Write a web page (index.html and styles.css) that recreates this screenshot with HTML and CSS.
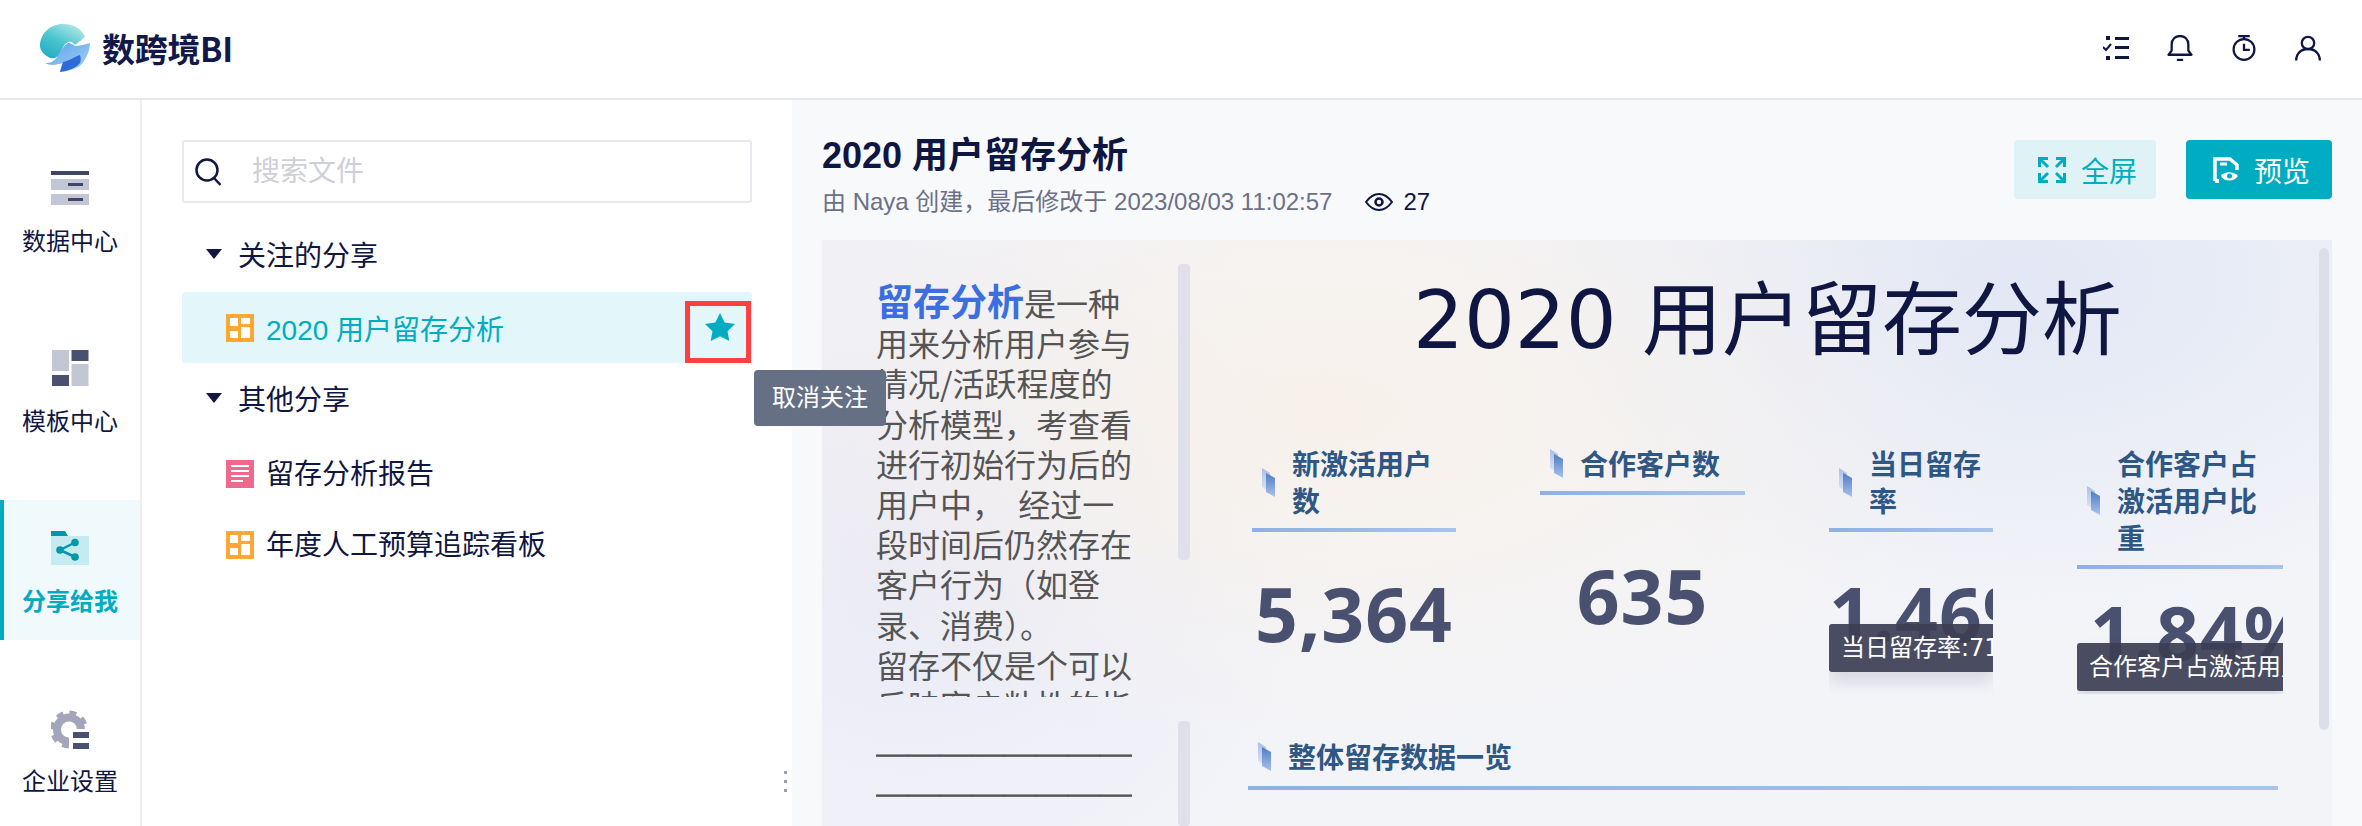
FILE: index.html
```html
<!doctype html>
<html lang="zh-CN">
<head>
	<meta charset="UTF-8">
	<title>数跨境BI</title>
	<link rel="stylesheet" href="styles.css">
</head>
<body>
	<svg class="defs" width="0" height="0">
		<defs>
			<linearGradient id="markBack" x1="0" y1="0" x2="0" y2="1">
				<stop offset="0" stop-color="#a9bfe6"/>
				<stop offset="1" stop-color="#dfe6f5"/>
			</linearGradient>
			<linearGradient id="markFront" x1="0" y1="0" x2="0" y2="1">
				<stop offset="0" stop-color="#4f7cc6"/>
				<stop offset="1" stop-color="#a9c2ea"/>
			</linearGradient>
			<linearGradient id="logoBall" x1="0.8" y1="0" x2="0.1" y2="1">
				<stop offset="0" stop-color="#b5e8e8"/>
				<stop offset="0.5" stop-color="#4cc6cf"/>
				<stop offset="1" stop-color="#1fa9c4"/>
			</linearGradient>
			<linearGradient id="logoWave" x1="0" y1="0" x2="1" y2="1">
				<stop offset="0" stop-color="#5aa0ea"/>
				<stop offset="1" stop-color="#a9d4f5"/>
			</linearGradient>
			<symbol id="mark" viewBox="0 0 13 29">
				<path d="M0 0 8 5V24L0 19Z" fill="url(#markBack)"/>
				<path d="M4 5 13 10V29L4 24Z" fill="url(#markFront)"/>
			</symbol>
			<symbol id="dash" viewBox="0 0 28 28">
				<rect width="28" height="28" fill="#ffa733"/>
				<rect x="4" y="4" width="8" height="8" fill="#fff"/>
				<rect x="15" y="4" width="9" height="6" fill="#fff"/>
				<rect x="4" y="17" width="8" height="7" fill="#fff"/>
				<rect x="15" y="13" width="9" height="11" fill="#fff"/>
			</symbol>
		</defs>
	</svg>

	<header class="topbar">
		<div class="logo">
			<svg class="logo-mark" viewBox="0 0 50 48">
				<path d="M23 0C34 0 42 5 45 13 41 16 38 19 35 21 33 18 30 17 28 18 24 20 22 25 20 29 18 33 15 35 10 34 4 31 0 26 0 22 0 10 10 0 23 0Z" fill="url(#logoBall)"/>
				<path d="M5 39C10 39 14 38 17 33 20 28 23 22 28 19 31 19 33 21 35 22 40 22 45 20 50 19 50 26 47 33 42 40 38 44 33 46 20 48 21 44 22 41 23 39 17 41 10 42 5 39Z" fill="url(#logoWave)"/>
				<path d="M23 38C29 37 34 33 40 31 41 34 41 37 40 39 36 44 28 47 20 48 21 44 22 41 23 38Z" fill="#2f6bd8"/>
			</svg>
			<span class="logo-text">数跨境BI</span>
		</div>
		<div class="top-icons">
			<svg class="top-icon" viewBox="0 0 26 24">
				<path d="M3 0h4v4H3zM3 20h4v4H3zM12 1h14v3H12zM12 10h14v3H12zM12 20h14v3H12z" fill="#0f1642"/>
				<path d="M0 11 3 14 8 8" fill="none" stroke="#0f1642" stroke-width="2"/>
			</svg>
			<svg class="top-icon" viewBox="0 0 24 25">
				<path d="M1 19H23L20 15V9C20 4 16.500 1 12 1S4 4 4 9V15Z" fill="none" stroke="#0f1642" stroke-width="2.200" stroke-linejoin="round"/>
				<path d="M9 24H15" stroke="#0f1642" stroke-width="2.200"/>
			</svg>
			<svg class="top-icon" viewBox="0 0 24 27">
				<circle cx="12" cy="15" r="10.800" fill="none" stroke="#0f1642" stroke-width="2.300"/>
				<path d="M6 1.200H18M12 1V4M12 9V15.500H18" fill="none" stroke="#0f1642" stroke-width="2.400"/>
			</svg>
			<svg class="top-icon" viewBox="0 0 26 25">
				<circle cx="13" cy="7.500" r="6.200" fill="none" stroke="#0f1642" stroke-width="2.300"/>
				<path d="M1.200 25C1.200 18 6 13.500 13 13.500S24.800 18 24.800 25" fill="none" stroke="#0f1642" stroke-width="2.300"/>
			</svg>
		</div>
	</header>

	<div class="main">
		<nav class="sidenav">
			<a class="nav-item">
				<svg class="nav-icon" viewBox="0 0 38 36">
					<rect y="1" width="38" height="4" fill="#3f4668"/>
					<rect y="9" width="38" height="11" fill="#c3c6d3"/>
					<rect y="24" width="38" height="11" fill="#c3c6d3"/>
					<rect x="17" y="13" width="15" height="3" fill="#3f4668"/>
					<rect x="17" y="28" width="15" height="3" fill="#3f4668"/>
				</svg>
				<span>数据中心</span>
			</a>
			<a class="nav-item">
				<svg class="nav-icon" viewBox="0 0 38 36">
					<rect x="1" width="17" height="21" fill="#c3c6d3"/>
					<rect x="20.500" width="17" height="11" fill="#4a5070"/>
					<rect x="1" y="25" width="17" height="11" fill="#4a5070"/>
					<rect x="20.500" y="14" width="17" height="22" fill="#c3c6d3"/>
				</svg>
				<span>模板中心</span>
			</a>
			<a class="nav-item nav-item-active">
				<svg class="nav-icon" viewBox="0 0 38 36">
					<path d="M0 6H38V35H0Z" fill="#c5eaf0"/>
					<path d="M0 1H14L17 6H0Z" fill="#0097a7"/>
					<path d="M9 20 24 12.500M9 20 24 27" stroke="#0097a7" stroke-width="2.500"/>
					<circle cx="9" cy="20" r="3.800" fill="#0097a7"/>
					<circle cx="24" cy="12.500" r="3.800" fill="#0097a7"/>
					<circle cx="24" cy="27" r="3.800" fill="#0097a7"/>
				</svg>
				<span>分享给我</span>
			</a>
			<a class="nav-item">
				<svg class="nav-icon nav-icon-tall" viewBox="0 0 38 39">
					<circle cx="18" cy="19.500" r="12" fill="none" stroke="#a3a6bb" stroke-width="8"/>
					<circle cx="18" cy="19.500" r="17" fill="none" stroke="#a3a6bb" stroke-width="4" stroke-dasharray="7 6.350"/>
					<rect x="18" y="19" width="20" height="20" fill="#fff"/>
					<rect x="22" y="22" width="16" height="6" fill="#4a5070"/>
					<rect x="22" y="33" width="16" height="6" fill="#4a5070"/>
				</svg>
				<span>企业设置</span>
			</a>
		</nav>

		<aside class="panel">
			<div class="search">
				<svg class="search-icon" viewBox="0 0 26 28">
					<circle cx="12" cy="12" r="10.500" fill="none" stroke="#0f1642" stroke-width="2.500"/>
					<path d="M19 20 25.500 27" stroke="#0f1642" stroke-width="2.500"/>
				</svg>
				<span class="search-text">搜索文件</span>
			</div>

			<div class="group-head"><i class="caret"></i>关注的分享</div>
			<div class="file-row file-row-active">
				<svg class="file-icon"><use href="#dash"/></svg>
				<span>2020 用户留存分析</span>
				<div class="star-box">
					<svg class="star" viewBox="0 0 30 28">
						<path d="M15 0 19.600 9.500 30 11 22.500 18.300 24.300 28 15 23.200 5.700 28 7.500 18.300 0 11 10.400 9.500Z" fill="#00acc1"/>
					</svg>
				</div>
			</div>
			<div class="group-head group-head-next"><i class="caret"></i>其他分享</div>
			<div class="file-row file-row-first">
				<svg class="file-icon" viewBox="0 0 28 28">
					<rect width="28" height="28" fill="#f0688c"/>
					<path d="M5 6H23M5 11H23M5 16H23M5 21H17" stroke="#fff" stroke-width="2"/>
				</svg>
				<span class="file-name">留存分析报告</span>
			</div>
			<div class="file-row">
				<svg class="file-icon"><use href="#dash"/></svg>
				<span class="file-name">年度人工预算追踪看板</span>
			</div>

			<div class="tooltip">取消关注</div>
			<div class="resizer"><i></i><i></i><i></i></div>
		</aside>

		<section class="content">
			<div class="content-head">
				<div>
					<h1 class="page-title">2020 用户留存分析</h1>
					<div class="meta">
						<span>由 Naya 创建，最后修改于 2023/08/03 11:02:57</span>
						<svg class="eye" viewBox="0 0 28 18">
							<path d="M1 9C5 3.500 9 1 14 1S23 3.500 27 9C23 14.500 19 17 14 17S5 14.500 1 9Z" fill="none" stroke="#0f1642" stroke-width="2"/>
							<circle cx="14" cy="9" r="3.500" fill="none" stroke="#0f1642" stroke-width="2.500"/>
						</svg>
						<span class="views">27</span>
					</div>
				</div>
				<div class="actions">
					<a class="btn btn-light">
						<svg class="btn-icon" viewBox="0 0 28 26" fill="none" stroke="#00acc1" stroke-width="3">
							<path d="M1.500 10V1.500H10M2 2 10 10"/>
							<path d="M26.500 10V1.500H18M26 2 18 10"/>
							<path d="M1.500 16V24.500H10M2 24 10 16"/>
							<path d="M26.500 16V24.500H18M26 24 18 16"/>
						</svg>
						全屏
					</a>
					<a class="btn btn-solid">
						<svg class="btn-icon btn-icon-doc" viewBox="0 0 26 26">
							<path d="M2 24V2H17L24 8V13" fill="none" stroke="#fff" stroke-width="3.500"/>
							<path d="M7 7H14" stroke="#fff" stroke-width="3"/>
							<path d="M2 24H6" stroke="#fff" stroke-width="4"/>
							<path d="M8 19C11 14 21 14 25 19 21 25 11 25 8 19Z" fill="#fff"/>
							<circle cx="16.500" cy="19" r="2.500" fill="#00acc1"/>
						</svg>
						预览
					</a>
				</div>
			</div>

			<div class="report">
				<div class="report-side">
					<div class="side-block side-block-text">
						<div class="side-text">
							<b class="side-strong">留存分析</b>是一种用来分析用户参与情况/活跃程度的分析模型，考查看进行初始行为后的用户中，&nbsp;&nbsp;经过一段时间后仍然存在客户行为（如登录、消费）。<br>留存不仅是个可以反映客户粘性的指标，也是衡量产品价值的重要依据。
						</div>
						<div class="side-scroll"></div>
					</div>
					<div class="side-block side-block-lines">
						<div class="side-text side-text-lines">＿＿＿＿＿＿＿＿<br>＿＿＿＿＿＿＿＿</div>
						<div class="side-scroll side-scroll-full"></div>
					</div>
				</div>

				<div class="report-body">
					<h2 class="report-title">2020 用户留存分析</h2>
					<div class="kpis">
						<div class="kpi kpi-w1">
							<div class="kpi-head">
								<svg class="mark"><use href="#mark"/></svg>
								<div class="kpi-label">新激活用户数</div>
							</div>
							<div class="kpi-value"><span>5,364</span></div>
						</div>
						<div class="kpi kpi-w2">
							<div class="kpi-head">
								<svg class="mark"><use href="#mark"/></svg>
								<div class="kpi-label">合作客户数</div>
							</div>
							<div class="kpi-value"><span>635</span></div>
						</div>
						<div class="kpi kpi-w3">
							<div class="kpi-head">
								<svg class="mark"><use href="#mark"/></svg>
								<div class="kpi-label">当日留存率</div>
							</div>
							<div class="kpi-value kpi-value-start">
								<span>1.46%</span>
								<div class="kpi-tip">当日留存率:71.46%</div>
							</div>
						</div>
						<div class="kpi kpi-w4">
							<div class="kpi-head">
								<svg class="mark"><use href="#mark"/></svg>
								<div class="kpi-label">合作客户占激活用户比重</div>
							</div>
							<div class="kpi-value kpi-value-start kpi-value-pad">
								<span>1.84%</span>
								<div class="kpi-tip">合作客户占激活用户比重:11.84%</div>
							</div>
						</div>
					</div>
					<div class="section-head">
						<svg class="mark"><use href="#mark"/></svg>
						<span>整体留存数据一览</span>
					</div>
				</div>
				<div class="report-scroll"></div>
			</div>
		</section>
	</div>
</body>
</html>
```

FILE: styles.css
```css
*{
	margin: 0;
	padding: 0;
	box-sizing: border-box;
}
html,body{
	height: 100%;
	overflow: hidden;
}
body{
	font-family: "Liberation Sans", "Noto Sans CJK SC", sans-serif;
	color: #0f1642;
	background: #fff;
	display: flex;
	flex-direction: column;
}
.defs{
	position: absolute;
}

/* top bar */
.topbar{
	height: 100px;
	flex: none;
	border-bottom: 2px solid #e8e8ee;
	display: flex;
	align-items: center;
	justify-content: space-between;
	padding: 0 41px 3px 40px;
}
.logo{
	display: flex;
	align-items: center;
	gap: 12px;
}
.logo-mark{
	width: 50px;
	height: 48px;
}
.logo-text{
	font-family: "Noto Sans CJK SC", sans-serif;
	font-weight: 700;
	font-size: 33px;
	line-height: 40px;
	letter-spacing: -0.3px;
	color: #12184a;
}
.top-icons{
	display: flex;
	align-items: center;
	gap: 38px;
}
.top-icon{
	height: 26px;
	width: 26px;
}

.main{
	flex: 1;
	display: flex;
	min-height: 0;
}

/* left nav */
.sidenav{
	width: 142px;
	flex: none;
	border-right: 2px solid #eeeef2;
	padding-top: 40px;
	display: flex;
	flex-direction: column;
	gap: 40px;
}
.nav-item{
	height: 140px;
	flex: none;
	display: flex;
	flex-direction: column;
	align-items: center;
	padding-top: 30px;
	font-size: 24px;
	line-height: 34px;
	color: #0f1642;
}
.nav-icon{
	width: 38px;
	height: 36px;
	margin-bottom: 19px;
}
.nav-icon-tall{
	height: 39px;
	margin-bottom: 16px;
}
.nav-item-active{
	background: #f0f9fb;
	border-left: 4px solid #00acc1;
	padding-right: 4px;
	color: #00acc1;
	font-weight: 700;
}

/* file panel */
.panel{
	width: 650px;
	flex: none;
	padding: 40px 40px 0;
	position: relative;
	z-index: 2;
	background: #fff;
}
.search{
	height: 63px;
	border: 2px solid #e8e8ee;
	border-radius: 3px;
	display: flex;
	align-items: center;
	padding-left: 11px;
	margin-bottom: 17px;
}
.search-icon{
	width: 26px;
	height: 28px;
	margin-right: 31px;
}
.search-text{
	font-size: 28px;
	color: #cfcfd8;
	padding-bottom: 5px;
}
.group-head{
	height: 70px;
	display: flex;
	align-items: center;
	padding: 0 0 2px 24px;
	font-size: 28px;
}
.group-head-next{
	height: 71px;
}
.caret{
	width: 0;
	height: 0;
	border-left: 8px solid transparent;
	border-right: 8px solid transparent;
	border-top: 10px solid #0f1642;
	margin-right: 16px;
}
.file-row{
	height: 71px;
	display: flex;
	align-items: center;
	padding-left: 44px;
	font-size: 28px;
	position: relative;
}
.file-row-active{
	margin-top: 2px;
	background: #e3f6f9;
	color: #00acc1;
	border-radius: 4px;
}
.file-row-first{
	margin-top: 4px;
}
.file-icon{
	width: 28px;
	height: 28px;
	margin-right: 12px;
	flex: none;
}
.file-name{
	padding-bottom: 3px;
}
.star-box{
	position: absolute;
	top: 9px;
	right: 1px;
	width: 66px;
	height: 62px;
	border: 5px solid #ff4040;
	display: flex;
	align-items: center;
	justify-content: center;
}
.star{
	width: 30px;
	height: 28px;
	margin: 0 0 10px 3px;
}
.tooltip{
	position: absolute;
	left: 612px;
	top: 270px;
	width: 132px;
	height: 56px;
	background: #667085;
	color: #fff;
	border-radius: 4px;
	font-size: 24px;
	line-height: 56px;
	text-align: center;
}
.resizer{
	position: absolute;
	left: 642px;
	top: 671px;
	display: flex;
	flex-direction: column;
	gap: 6px;
}
.resizer i{
	width: 3px;
	height: 3px;
	background: #9a9fb0;
}

/* content */
.content{
	flex: 1;
	min-width: 0;
	background: #f8f9fb;
	padding: 0 30px;
	display: flex;
	flex-direction: column;
}
.content-head{
	height: 140px;
	flex: none;
	display: flex;
	justify-content: space-between;
	padding-top: 35px;
}
.page-title{
	font-size: 36px;
	line-height: 42px;
	font-weight: 700;
}
.meta{
	display: flex;
	align-items: center;
	margin-top: 8px;
	font-size: 24px;
	line-height: 34px;
	color: #6b7088;
}
.eye{
	width: 28px;
	height: 18px;
	margin: 0 10px 0 33px;
}
.views{
	color: #0f1642;
}
.actions{
	display: flex;
	gap: 30px;
	padding-top: 5px;
}
.btn{
	height: 59px;
	display: flex;
	align-items: center;
	justify-content: center;
	gap: 15px;
	padding-left: 5px;
	border-radius: 4px;
	font-size: 28px;
}
.btn-light{
	width: 142px;
	background: #dff2f6;
	color: #00acc1;
}
.btn-solid{
	width: 146px;
	background: #00acc1;
	color: #fff;
}
.btn-icon{
	width: 28px;
	height: 26px;
}
.btn-icon-doc{
	width: 26px;
}

/* report */
.report{
	flex: 1;
	min-height: 0;
	position: relative;
	overflow: hidden;
	display: flex;
	background:
		radial-gradient(ellipse 700px 340px at 500px 170px, #f7f1ea, transparent),
		radial-gradient(ellipse 560px 340px at 1200px 40px, #e2e7f5, transparent),
		radial-gradient(ellipse 420px 420px at 90px 300px, #e8e9f6, transparent),
		#f3f4f8;
}
.report-side{
	width: 368px;
	flex: none;
	padding-top: 24px;
	display: flex;
	flex-direction: column;
	gap: 24px;
}
.side-block{
	display: flex;
	justify-content: space-between;
	padding-left: 54px;
}
.side-block-text{
	height: 433px;
}
.side-block-lines{
	flex: 1;
}
.side-text{
	width: 256px;
	overflow: hidden;
	padding-top: 16px;
	font-size: 32px;
	line-height: 40.200px;
	color: #555;
	font-family: "Noto Sans CJK SC", sans-serif;
}
.side-text-lines{
	padding-top: 0;
	margin-top: -3px;
	-webkit-text-stroke: 0.8px #555;
}
.side-strong{
	font-size: 37px;
	color: #3b6fe0;
}
.side-scroll{
	width: 12px;
	height: 296px;
	border-radius: 4px;
	background: #dfe0ea;
}
.side-scroll-full{
	height: 100%;
}
.report-body{
	flex: 1;
	min-width: 0;
	padding: 31px 49px 0 62px;
	font-family: "Noto Sans", "Noto Sans CJK SC", sans-serif;
}
.report-title{
	font-size: 80px;
	line-height: 100px;
	font-weight: 400;
	text-align: center;
	color: #0f1642;
	font-family: "DejaVu Sans", "Noto Sans CJK SC", sans-serif;
}
.kpis{
	display: flex;
	justify-content: space-between;
	margin-top: 74px;
	height: 249px;
}
.kpi{
	display: flex;
	flex-direction: column;
}
.kpi-w1{ width: 204px; }
.kpi-w2{ width: 205px; }
.kpi-w3{ width: 164px; }
.kpi-w4{ width: 206px; }
.kpi-head{
	display: flex;
	align-items: center;
	padding: 0 8px 9px 10px;
	border-bottom: 4px solid;
	border-image: linear-gradient(90deg, #8fb0e3, #a9c4e9) 1;
	flex: none;
}
.mark{
	width: 13px;
	height: 29px;
	flex: none;
	margin-right: 17px;
}
.kpi-label{
	flex: 1;
	min-width: 0;
	font-size: 28px;
	line-height: 37px;
	font-weight: 700;
	color: #2e5785;
	font-family: "Noto Sans CJK SC", sans-serif;
}
.kpi-value{
	flex: 1;
	min-height: 0;
	position: relative;
	overflow: hidden;
	display: flex;
	align-items: center;
	justify-content: center;
	font-size: 75px;
	line-height: 80px;
	font-weight: 700;
	letter-spacing: 1px;
	color: #4a5070;
	white-space: nowrap;
}
.kpi-value-start{
	justify-content: flex-start;
}
.kpi-value-pad{
	padding-left: 13px;
}
.kpi-tip{
	position: absolute;
	left: 0;
	right: 0;
	top: calc(50% + 11px);
	height: 48px;
	padding-left: 12px;
	background: rgba(60, 62, 84, 0.92);
	color: #fff;
	font-family: "DejaVu Sans", "Noto Sans CJK SC", sans-serif;
	font-size: 24px;
	line-height: 48px;
	font-weight: 400;
	letter-spacing: 0;
	border-radius: 3px 0 0 3px;
	overflow: hidden;
	box-shadow: 0 10px 16px rgba(60, 62, 84, 0.15);
}
.section-head{
	display: flex;
	align-items: center;
	padding: 0 10px 11px;
	margin: 44px 5px 0 -4px;
	border-bottom: 4px solid;
	border-image: linear-gradient(90deg, #8fb0e3, #a9c4e9) 1;
	font-family: "Noto Sans CJK SC", sans-serif;
	font-size: 28px;
	line-height: 37px;
	font-weight: 700;
	color: #2e5785;
}
.report-scroll{
	position: absolute;
	right: 3px;
	top: 8px;
	width: 10px;
	height: 482px;
	border-radius: 5px;
	background: #dcdfea;
}
```
